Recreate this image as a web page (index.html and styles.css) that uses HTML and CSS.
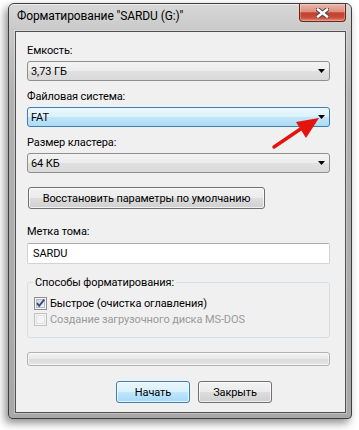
FILE: index.html
```html
<!DOCTYPE html>
<html lang="ru">
<head>
<meta charset="utf-8">
<title>Форматирование</title>
<link rel="stylesheet" href="styles.css">
</head>
<body>
<div class="stage">
  <div class="window">
    <div class="titlebar">
      <span class="title">Форматирование "SARDU (G:)"</span>
      <div class="close">
        <svg width="13" height="10" viewBox="0 0 13 10">
          <path d="M2 1.5 L11 8.5 M11 1.5 L2 8.5" stroke="#4a4a4a" stroke-width="4.4" stroke-linecap="square" fill="none"/>
          <path d="M2 1.5 L11 8.5 M11 1.5 L2 8.5" stroke="#ffffff" stroke-width="2.4" stroke-linecap="square" fill="none"/>
        </svg>
      </div>
    </div>
    <div class="client">
      <div class="lbl">Емкость:</div>
      <div class="combo"><span>3,73 ГБ</span><svg class="arr" width="7" height="4" viewBox="0 0 7 4"><polygon points="0,0 7,0 3.5,4" fill="#000"/></svg></div>

      <div class="lbl gap">Файловая система:</div>
      <div class="combo focus"><span>FAT</span><svg class="arr" width="7" height="4" viewBox="0 0 7 4"><polygon points="0,0 7,0 3.5,4" fill="#000"/></svg></div>

      <div class="lbl gap">Размер кластера:</div>
      <div class="combo"><span>64 КБ</span><svg class="arr" width="7" height="4" viewBox="0 0 7 4"><polygon points="0,0 7,0 3.5,4" fill="#000"/></svg></div>

      <div class="btn restore">Восстановить параметры по умолчанию</div>

      <div class="lbl label-vol">Метка тома:</div>
      <div class="input">SARDU</div>

      <fieldset class="group">
        <legend>Способы форматирования:</legend>
        <div class="cbrow">
          <svg class="cb" width="13" height="13" viewBox="0 0 13 13">
            <defs>
              <linearGradient id="cbg" x1="0" y1="0" x2="1" y2="1">
                <stop offset="0" stop-color="#cdd1d7"/>
                <stop offset="1" stop-color="#f7f7f7"/>
              </linearGradient>
            </defs>
            <rect x="0.5" y="0.5" width="12" height="12" fill="#f4f4f4" stroke="#8e8f8f"/>
            <rect x="2.5" y="2.5" width="8" height="8" fill="url(#cbg)" stroke="#b8bcc2"/>
            <path d="M3 6.2 L5.2 8.8 L10.2 2.6" stroke="#2f4a86" stroke-width="1.8" fill="none"/>
          </svg>
          <span>Быстрое (очистка оглавления)</span>
        </div>
        <div class="cbrow disabled">
          <svg class="cb" width="13" height="13" viewBox="0 0 13 13">
            <rect x="0.5" y="0.5" width="12" height="12" fill="#f4f4f4" stroke="#c2c2c2"/>
            <rect x="2.5" y="2.5" width="8" height="8" fill="#f4f4f4" stroke="#e2e2e2"/>
          </svg>
          <span>Создание загрузочного диска MS-DOS</span>
        </div>
      </fieldset>

      <div class="progress"></div>

      <div class="actions">
        <div class="btn default">Начать</div>
        <div class="btn">Закрыть</div>
      </div>
    </div>
  </div>
</div>
<svg class="redarrow" width="359" height="430" viewBox="0 0 359 430">
  <line x1="274" y1="147" x2="302" y2="128" stroke="#e4130c" stroke-width="3.4" stroke-linecap="round"/>
  <polygon points="319,118 296,122 306,138" fill="#e4130c"/>
</svg>
</body>
</html>
```
FILE: styles.css
```css
* { box-sizing: border-box; }

html, body {
  margin: 0;
  padding: 0;
}

body {
  width: 359px;
  height: 430px;
  background: #ffffff;
  font-family: Roboto, "Open Sans", sans-serif;
  font-size: 11px;
  letter-spacing: -0.1px;
  color: #000;
  overflow: hidden;
  position: relative;
}

.stage {
  padding: 3px 0 0 8px;
}

.window {
  width: 344px;
  height: 416px;
  border: 1px solid #3e3e3e;
  border-radius: 6px 6px 4px 4px;
  background: linear-gradient(#d8d8d8 0, #c8c8c8 28px, #b2b2b2 90px, #a8a8a8 100%);
  padding: 0 5px 5px 6px;
  box-shadow: -3px 4px 8px rgba(0, 0, 0, 0.45), inset 0 1px 0 rgba(255, 255, 255, 0.6);
  display: flex;
  flex-direction: column;
}

.titlebar {
  height: 27px;
  display: flex;
  justify-content: space-between;
  align-items: flex-start;
  padding-left: 2px;
}

.title {
  margin-top: 5px;
  line-height: 15px;
  font-size: 12px;
  white-space: nowrap;
}

.close {
  width: 47px;
  height: 18px;
  border: 1px solid #6e2318;
  border-top: none;
  border-radius: 0 0 4px 4px;
  background: linear-gradient(#ebb8ac 0, #dc8f80 45%, #c4412f 52%, #c84a36 78%, #df8b74 100%);
  display: flex;
  align-items: center;
  justify-content: center;
  box-shadow: inset 0 0 0 1px rgba(255, 255, 255, 0.25);
}

.client {
  flex: 1;
  background: #f0f0f0;
  border: 1px solid #505050;
  padding: 11px 15px 0 11px;
  display: flex;
  flex-direction: column;
  box-shadow: 0 0 0 1px rgba(255, 255, 255, 0.3);
}

.lbl {
  line-height: 15px;
  margin-bottom: 3px;
  white-space: nowrap;
}

.lbl.gap {
  margin-top: 8px;
}

.combo {
  height: 20px;
  border: 1px solid #8e8f8f;
  border-radius: 3px;
  background: linear-gradient(#f3f3f3 0, #ececec 50%, #e0e0e0 52%, #dadada 100%);
  display: flex;
  align-items: center;
  justify-content: space-between;
  padding: 0 4px 0 3px;
  line-height: 15px;
}

.combo.focus {
  border-color: #3c7fb1;
  background: linear-gradient(#ecf7fd 0, #dcf1fc 50%, #c2e6fb 52%, #addbf5 100%);
}

.btn {
  height: 22px;
  border: 1px solid #707070;
  border-radius: 3px;
  background: linear-gradient(#f2f2f2 0, #ebebeb 50%, #dddddd 52%, #cfcfcf 100%);
  box-shadow: inset 0 0 0 1px rgba(255, 255, 255, 0.7);
  display: flex;
  align-items: center;
  justify-content: center;
  line-height: 15px;
  white-space: nowrap;
}

.btn.restore {
  width: 237px;
  margin: 14px 0 0 1px;
}

.btn.default {
  border-color: #3c7fb1;
  background: linear-gradient(#eaf6fd 0, #d9f0fc 50%, #bee6fd 52%, #a7d9f5 100%);
}

.label-vol {
  margin-top: 15px;
  margin-bottom: 4px;
}

.input {
  height: 21px;
  background: #fff;
  border: 1px solid #d0d3d8;
  border-top-color: #abadb3;
  border-radius: 2px;
  padding: 0 5px;
  line-height: 19px;
}

.group {
  margin: 11px 0 0 0;
  border: 1px solid #d5dfe5;
  border-radius: 3px;
  padding: 5px 6px 10px 6px;
  min-width: 0;
}

.group legend {
  padding: 0 2px;
  line-height: 15px;
  margin-left: -1px;
}

.cbrow {
  height: 16px;
  display: flex;
  align-items: center;
  gap: 3px;
  line-height: 15px;
  white-space: nowrap;
}

.cbrow.disabled {
  color: #9a9a9a;
}

.cb {
  flex: none;
  display: block;
}

.progress {
  margin-top: 14px;
  height: 14px;
  border: 1px solid #b2b2b2;
  border-radius: 3px;
  background: linear-gradient(#f4f4f4 0, #e8e8e8 45%, #dcdcdc 55%, #e2e2e2 85%, #ececec 100%);
  box-shadow: inset 0 0 0 1px rgba(255, 255, 255, 0.5);
}

.actions {
  margin-top: 15px;
  display: flex;
  gap: 8px;
  padding-left: 89px;
}

.actions .btn {
  width: 74px;
}

.redarrow {
  position: absolute;
  left: 0;
  top: 0;
  pointer-events: none;
}
```
